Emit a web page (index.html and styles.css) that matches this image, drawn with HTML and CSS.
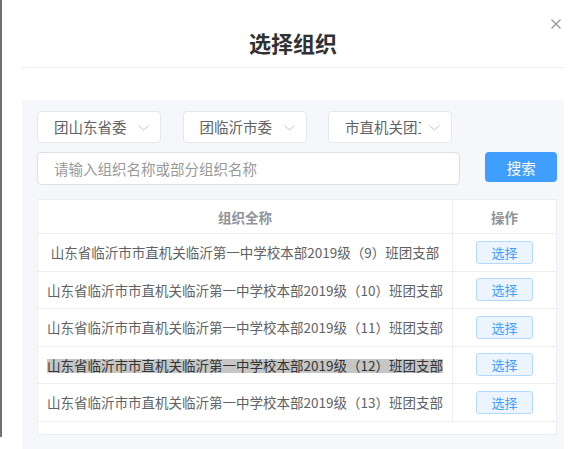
FILE: index.html
```html
<!DOCTYPE html>
<html>
<head>
    <meta charset="UTF-8">
    <title>选择组织</title>
    <link rel="stylesheet" href="styles.css">
</head>
<body>
    <div class="dialog">
        <div class="dialog-header">
            <span class="dialog-title">选择组织</span>
            <span class="dialog-close">
                <svg width="10" height="10" viewBox="0 0 10 10">
                    <path d="M0.5 0.5 L9.5 9.5 M9.5 0.5 L0.5 9.5" stroke="#909399" stroke-width="1.2" fill="none"/>
                </svg>
            </span>
        </div>

        <div class="filter-panel">
            <!-- 三级组织选择 -->
            <div class="select-row">
                <div class="select">
                    <span class="select-label">团山东省委</span>
                    <svg class="select-arrow" width="11" height="6" viewBox="0 0 11 6"><polyline points="0.5,0.5 5.5,5 10.5,0.5" stroke="#c0c4cc" stroke-width="1" fill="none"/></svg>
                </div>
                <div class="select">
                    <span class="select-label">团临沂市委</span>
                    <svg class="select-arrow" width="11" height="6" viewBox="0 0 11 6"><polyline points="0.5,0.5 5.5,5 10.5,0.5" stroke="#c0c4cc" stroke-width="1" fill="none"/></svg>
                </div>
                <div class="select">
                    <span class="select-label">市直机关团工委</span>
                    <svg class="select-arrow" width="11" height="6" viewBox="0 0 11 6"><polyline points="0.5,0.5 5.5,5 10.5,0.5" stroke="#c0c4cc" stroke-width="1" fill="none"/></svg>
                </div>
            </div>

            <div class="search-row">
                <input class="search-input" type="text" placeholder="请输入组织名称或部分组织名称">
                <button class="search-button">搜索</button>
            </div>

            <!-- 组织列表 -->
            <div class="org-table">
                <div class="org-row org-row-head">
                    <div class="org-name org-head">组织全称</div>
                    <div class="org-op org-head">操作</div>
                </div>
                <div class="org-row">
                    <div class="org-name">山东省临沂市市直机关临沂第一中学校本部2019级（9）班团支部</div>
                    <div class="org-op"><button class="pick-button">选择</button></div>
                </div>
                <div class="org-row">
                    <div class="org-name">山东省临沂市市直机关临沂第一中学校本部2019级（10）班团支部</div>
                    <div class="org-op"><button class="pick-button">选择</button></div>
                </div>
                <div class="org-row">
                    <div class="org-name">山东省临沂市市直机关临沂第一中学校本部2019级（11）班团支部</div>
                    <div class="org-op"><button class="pick-button">选择</button></div>
                </div>
                <div class="org-row">
                    <div class="org-name"><span class="picked-text">山东省临沂市市直机关临沂第一中学校本部2019级（12）班团支部</span></div>
                    <div class="org-op"><button class="pick-button">选择</button></div>
                </div>
                <div class="org-row">
                    <div class="org-name">山东省临沂市市直机关临沂第一中学校本部2019级（13）班团支部</div>
                    <div class="org-op"><button class="pick-button">选择</button></div>
                </div>
            </div>
        </div>
    </div>
</body>
</html>
```

FILE: styles.css
```css
* {
    box-sizing: border-box;
}

html,
body {
    height: 100%;
}

body {
    margin: 0;
    background-color: #fff;
    font-family: "Noto Sans CJK SC", sans-serif;
    color: #606266;
}

/* 左侧那条深灰边线只到 437px */
.dialog {
    height: 100%;
    display: flex;
    flex-direction: column;
    padding: 0 18px 0 22px;
    background: linear-gradient(#707070, #707070) no-repeat 0 0 / 2px 437px;
}

.dialog-header {
    position: relative;
    flex: 0 0 68px;
    padding-top: 27px;
    border-bottom: 1px solid #ebeef5;
    text-align: center;
}

.dialog-title {
    font-size: 22px;
    line-height: 30px;
    font-weight: bold;
    color: #303133;
}

.dialog-close {
    position: absolute;
    top: 19px;
    right: 3px;
    width: 10px;
    height: 10px;
    display: flex;
}

.filter-panel {
    flex: 1;
    margin-top: 32px;
    padding: 11px 7px 0 15px;
    background-color: #f5f7fa;
}

.select-row {
    display: flex;
    gap: 21.5px;
}

.select {
    position: relative;
    width: 124px;
    height: 32px;
    padding: 0 30px 0 16px;
    background-color: #fff;
    border: 1px solid #e4e7ed;
    border-radius: 4px;
    font-size: 14.5px;
    line-height: 30px;
}

.select-label {
    display: block;
    white-space: nowrap;
    overflow: hidden;
}

.select-arrow {
    position: absolute;
    top: 13px;
    right: 11px;
}

.search-row {
    display: flex;
    align-items: flex-start;
    margin-top: 9px;
}

.search-input {
    width: 425px;
    height: 33px;
    padding: 0 16px;
    border: 1px solid #dcdfe6;
    border-radius: 4px;
    font-family: "Noto Sans CJK SC", sans-serif;
    font-size: 14.5px;
    color: #606266;
    outline: none;
}

.search-input::placeholder {
    color: #999;
}

.search-button {
    margin-left: 25px;
    width: 72px;
    height: 30px;
    padding: 0;
    border: none;
    border-radius: 4px;
    background-color: #409eff;
    color: #fff;
    font-family: "Noto Sans CJK SC", sans-serif;
    font-size: 14.5px;
}

.org-table {
    margin-top: 14px;
    width: 520px;
    padding-bottom: 12px;
    background-color: #fff;
    border: 1px solid #ebeef5;
}

.org-row {
    display: flex;
    height: 37.5px;
    border-bottom: 1px solid #ebeef5;
}

.org-row-head {
    height: 34px;
}

.org-name {
    width: 415px;
    display: flex;
    align-items: center;
    justify-content: center;
    border-right: 1px solid #ebeef5;
    font-size: 13.5px;
    white-space: nowrap;
}

.org-op {
    flex: 1;
    display: flex;
    align-items: center;
    justify-content: center;
}

.org-head {
    color: #909399;
    font-weight: bold;
    font-size: 13.5px;
}

.pick-button {
    width: 57px;
    height: 23px;
    padding: 0;
    border: 1px solid #b3d8ff;
    border-radius: 3px;
    background-color: #ecf5ff;
    color: #409eff;
    font-family: "Noto Sans CJK SC", sans-serif;
    font-size: 13px;
    line-height: 21px;
}

/* 选中文字的灰色底 */
.picked-text {
    color: #333;
    background: linear-gradient(to bottom, transparent 4px, #c6c6c6 4px, #c6c6c6 17.5px, transparent 17.5px);
}
```
